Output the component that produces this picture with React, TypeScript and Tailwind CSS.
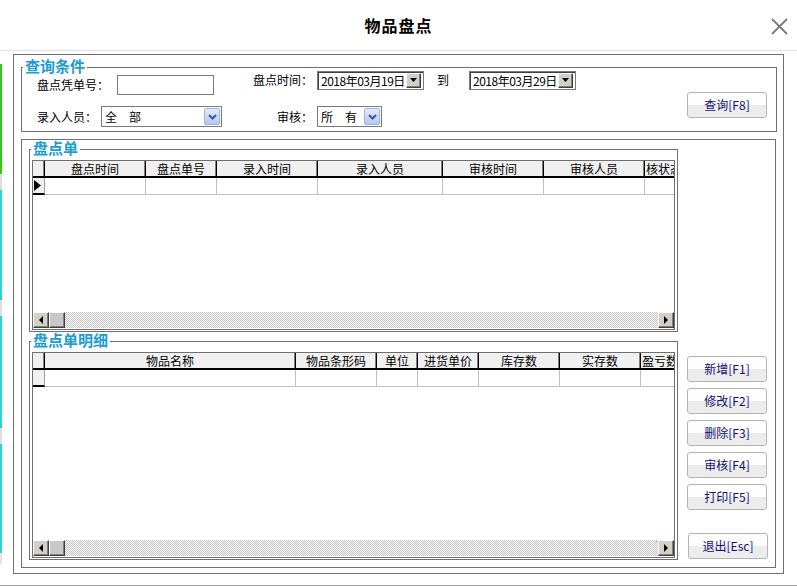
import React from "react";

type Col = { title: string; w: string; left?: boolean };

const orderCols: Col[] = [
  { title: "盘点时间", w: "w-[101px]" },
  { title: "盘点单号", w: "w-[71px]" },
  { title: "录入时间", w: "w-[101px]" },
  { title: "录入人员", w: "w-[125px]" },
  { title: "审核时间", w: "w-[101px]" },
  { title: "审核人员", w: "w-[101px]" },
  { title: "核状态", w: "w-[80px]", left: true },
];

const detailCols: Col[] = [
  { title: "物品名称", w: "w-[251px]" },
  { title: "物品条形码", w: "w-[81px]" },
  { title: "单位", w: "w-[41px]" },
  { title: "进货单价", w: "w-[61px]" },
  { title: "库存数", w: "w-[81px]" },
  { title: "实存数", w: "w-[81px]" },
  { title: "盈亏数", w: "w-[80px]", left: true },
];

function Triangle({ dir }: { dir: "left" | "right" | "down" }) {
  if (dir === "down") {
    return (
      <svg width="8" height="5" viewBox="0 0 8 5">
        <polygon points="0,0 7,0 3.5,4" fill="#000" />
      </svg>
    );
  }
  return (
    <svg width="5" height="8" viewBox="0 0 5 8">
      {dir === "left" ? (
        <polygon points="4,0 4,8 0,4" fill="#000" />
      ) : (
        <polygon points="0,0 0,8 4,4" fill="#000" />
      )}
    </svg>
  );
}

function ScrollBtn({ dir }: { dir: "left" | "right" }) {
  return (
    <div className="w-[16px] h-[16px] flex-none flex items-center justify-center bg-[#d4d0c8] border border-t-white border-l-white border-r-[#404040] border-b-[#404040] shadow-[inset_-1px_-1px_0_#808080]">
      <Triangle dir={dir} />
    </div>
  );
}

function DataGrid({ cols, h, marker }: { cols: Col[]; h: string; marker?: boolean }) {
  return (
    <div className={`mx-[2px] mt-[10px] mb-[1px] ${h} border border-[#6e6e6e] bg-white flex flex-col overflow-hidden`}>
      <div className="flex w-max flex-none">
        <div className="w-[12px] h-[17px] flex-none bg-[#f0f0f0] border-r border-black border-b-2 border-b-black shadow-[inset_-1px_0_0_#808080]" />
        {cols.map((c) => (
          <div
            key={c.title}
            className={`${c.w} h-[17px] flex-none bg-[#f0f0f0] border-r border-black border-b-2 border-b-black shadow-[inset_-1px_0_0_#808080] flex items-center ${c.left ? "justify-start pl-[1px]" : "justify-center"} text-[12px] leading-none text-black whitespace-nowrap overflow-hidden`}
          >
            {c.title}
          </div>
        ))}
      </div>
      <div className="flex w-max flex-none">
        <div className="w-[12px] h-[17px] flex-none bg-[#f0f0f0] border-r border-r-[#a0a0a0] border-b-2 border-b-black flex items-center pl-[1px]">
          {marker && (
            <svg width="7" height="11" viewBox="0 0 7 11">
              <polygon points="0,0 7,5.5 0,11" fill="#000" />
            </svg>
          )}
        </div>
        {cols.map((c) => (
          <div key={c.title} className={`${c.w} h-[17px] flex-none border-r border-b border-[#c0c0c0]`} />
        ))}
      </div>
      <div className="flex-1" />
      <div className="flex h-[16px] flex-none mb-[1px]">
        <ScrollBtn dir="left" />
        <div className="w-[16px] h-[16px] flex-none bg-[#c8c8c8] border border-t-white border-l-white border-r-[#404040] border-b-[#404040] shadow-[inset_-1px_-1px_0_#808080]" />
        <div className="flex-1 bg-[repeating-conic-gradient(#c4c4c4_0%_25%,#ffffff_0%_50%)] bg-[length:2px_2px]" />
        <ScrollBtn dir="right" />
      </div>
    </div>
  );
}

function Group({ title, className, children }: { title: string; className: string; children: React.ReactNode }) {
  return (
    <div className={`relative border border-[#6f6f6f] ${className}`}>
      <span className="absolute left-[1px] top-[-10px] bg-white px-[2px] text-[15px] leading-[16px] font-bold text-[#1a9cd4]">
        {title}
      </span>
      {children}
    </div>
  );
}

function ComboArrow() {
  return (
    <div className="w-[16px] h-[17px] rounded-[2px] border border-[#9fb2e6] bg-[linear-gradient(#e4eafc,#b7c7f2)] flex items-center justify-center">
      <svg width="9" height="6" viewBox="0 0 9 6">
        <polyline points="1,1 4.5,4.5 8,1" fill="none" stroke="#3b5693" strokeWidth="2" />
      </svg>
    </div>
  );
}

function DateBox({ value }: { value: string }) {
  return (
    <div className="w-[107px] h-[19px] flex items-center bg-white border border-[#7a7a7a] shadow-[inset_1px_1px_0_#404040] pl-[3px] pr-[2px]">
      <span className="flex-1 text-[12px] leading-none tracking-[-0.5px] text-black whitespace-nowrap">{value}</span>
      <div className="w-[15px] h-[15px] flex items-center justify-center bg-[#d4d0c8] border border-t-white border-l-white border-r-[#404040] border-b-[#404040] shadow-[inset_-1px_-1px_0_#808080]">
        <Triangle dir="down" />
      </div>
    </div>
  );
}

function Btn({ children, className = "" }: { children: React.ReactNode; className?: string }) {
  return (
    <button
      type="button"
      className={`w-[80px] h-[26px] flex-none rounded-[3px] border border-[#b4b4b4] bg-[linear-gradient(#fdfdfd_0%,#fdfdfd_48%,#ececec_52%,#ececec_100%)] text-[12px] leading-none text-[#10107a] ${className}`}
    >
      {children}
    </button>
  );
}

export default function App() {
  return (
    <div className="w-[797px] h-[586px] overflow-hidden bg-white flex flex-col font-['Noto_Sans_CJK_SC','Noto_Sans',sans-serif] text-black">
      <header className="h-[51px] flex-none border-b border-[#e4e4e4] flex items-center justify-center relative">
        <h1 className="text-[16px] font-bold leading-none tracking-[1px]">物品盘点</h1>
        <svg className="absolute right-[9px] top-[18px]" width="17" height="17" viewBox="0 0 17 17">
          <line x1="1" y1="1" x2="16" y2="16" stroke="#7a7a7a" strokeWidth="1.8" />
          <line x1="16" y1="1" x2="1" y2="16" stroke="#7a7a7a" strokeWidth="1.8" />
        </svg>
      </header>

      <div className="flex-1 flex border-b border-[#9a9a9a]">
        <div className="w-[2px] flex-none flex flex-col pt-[13px]">
          <div className="h-[110px] bg-[#36c81a]" />
          <div className="h-[16px] bg-[#dcdcdc]" />
          <div className="h-[110px] bg-[#2fd0d6]" />
          <div className="h-[16px] bg-[#dcdcdc]" />
          <div className="h-[112px] bg-[#2fd0d6]" />
          <div className="h-[16px] bg-[#dcdcdc]" />
          <div className="h-[109px] bg-[#2fd0d6]" />
          <div className="h-[11px] bg-[#e4e4e4]" />
        </div>

        <div className="pl-[11px] pt-[3px]">
          <div className="w-[771px] h-[520px] border border-[#707070] flex flex-col">
            {/* 查询条件 */}
            <Group title="查询条件" className="ml-[7px] mt-[12px] w-[756px] h-[65px] flex-none">
              <div className="flex pt-[3px]">
                <div className="flex flex-col pl-[15px] text-[12px]">
                  <div className="flex items-start h-[24px]">
                    <span className="mt-[4px] leading-[20px]">盘点凭单号：</span>
                    <div className="ml-[8px] mt-[4px] w-[97px] h-[20px] bg-white border border-[#7a7a7a]" />
                    <span className="ml-[39px] leading-[18px]">盘点时间：</span>
                    <div className="ml-[4px]">
                      <DateBox value="2018年03月19日" />
                    </div>
                    <span className="ml-[13px] leading-[18px]">到</span>
                    <div className="ml-[20px]">
                      <DateBox value="2018年03月29日" />
                    </div>
                  </div>
                  <div className="flex items-center h-[21px] mt-[11px]">
                    <span className="leading-[21px]">录入人员：</span>
                    <div className="ml-[4px] w-[121px] h-[21px] bg-white border border-[#7a7a7a] flex items-center pl-[3px] pr-[1px]">
                      <span className="flex-1 leading-none">全　部</span>
                      <ComboArrow />
                    </div>
                    <span className="ml-[55px] leading-[21px]">审核：</span>
                    <div className="ml-[4px] w-[65px] h-[21px] bg-white border border-[#7a7a7a] flex items-center pl-[3px] pr-[1px]">
                      <span className="flex-1 leading-none">所　有</span>
                      <ComboArrow />
                    </div>
                  </div>
                </div>
                <Btn className="ml-auto mr-[9px] mt-[21px]">查询[F8]</Btn>
              </div>
            </Group>

            {/* 列表区域 */}
            <div className="ml-[7px] mt-[7px] w-[755px] h-[429px] flex-none border border-[#707070] flex">
              <div className="ml-[7px] w-[649px] pt-[9px] flex flex-col gap-[9px]">
                <Group title="盘点单" className="h-[183px] flex-none">
                  <DataGrid cols={orderCols} h="h-[170px]" marker />
                </Group>
                <Group title="盘点单明细" className="h-[219px] flex-none">
                  <DataGrid cols={detailCols} h="h-[206px]" />
                </Group>
              </div>
              <div className="ml-[9px] pt-[216px] flex flex-col gap-[6px]">
                <Btn>新增[F1]</Btn>
                <Btn>修改[F2]</Btn>
                <Btn>删除[F3]</Btn>
                <Btn>审核[F4]</Btn>
                <Btn>打印[F5]</Btn>
                <Btn className="mt-[17px] ml-[1px]">退出[Esc]</Btn>
              </div>
            </div>
          </div>
        </div>
      </div>
    </div>
  );
}
